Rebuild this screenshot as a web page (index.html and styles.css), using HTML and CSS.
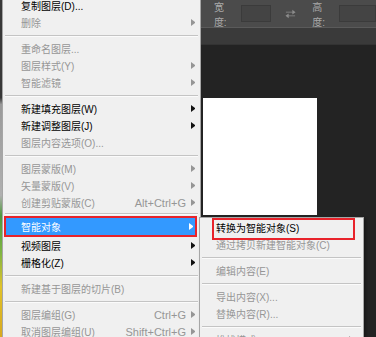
FILE: index.html
```html
<!DOCTYPE html>
<html lang="zh-CN">
<head>
    <meta charset="UTF-8">
    <meta name="viewport" content="width=device-width, initial-scale=1.0">
    <title>图层菜单</title>
    <link rel="stylesheet" href="styles.css">
</head>
<body>
    <div class="app">
        <div class="strip"></div>
        <div class="workspace">
            <div class="options-bar">
                <div class="preset"></div>
                <span class="opt-label label-w">宽度:</span>
                <div class="opt-input"></div>
                <svg class="swap" width="12" height="10" viewBox="0 0 12 10">
                    <path d="M1 2.5h7V0.5l3.5 2.5L8 5.5v-2H1z" fill="#8c8c8c"/>
                    <path d="M11 6.5H4v-2L0.5 7 4 9.5v-2h7z" fill="#8c8c8c"/>
                </svg>
                <span class="opt-label label-h">高度:</span>
                <div class="opt-input wide"></div>
            </div>
            <div class="tab-bar"></div>
            <div class="canvas">
                <div class="doc"></div>
            </div>
        </div>
    </div>

    <!-- layer context menu -->
    <div class="menu main-menu">
        <div class="item"><span class="text">复制图层(D)...</span></div>
        <div class="item off"><span class="text">删除</span><span class="arrow"></span></div>
        <div class="sep"></div>
        <div class="item off"><span class="text">重命名图层...</span></div>
        <div class="item off"><span class="text">图层样式(Y)</span><span class="arrow"></span></div>
        <div class="item off"><span class="text">智能滤镜</span><span class="arrow"></span></div>
        <div class="sep"></div>
        <div class="item"><span class="text">新建填充图层(W)</span><span class="arrow"></span></div>
        <div class="item"><span class="text">新建调整图层(J)</span><span class="arrow"></span></div>
        <div class="item off"><span class="text">图层内容选项(O)...</span></div>
        <div class="sep"></div>
        <div class="item off"><span class="text">图层蒙版(M)</span><span class="arrow"></span></div>
        <div class="item off"><span class="text">矢量蒙版(V)</span><span class="arrow"></span></div>
        <div class="item off"><span class="text">创建剪贴蒙版(C)</span><span class="key">Alt+Ctrl+G</span><span class="arrow"></span></div>
        <div class="sep slim"></div>
        <div class="item active"><span class="text">智能对象</span><span class="arrow"></span></div>
        <div class="item"><span class="text">视频图层</span><span class="arrow"></span></div>
        <div class="item"><span class="text">栅格化(Z)</span><span class="arrow"></span></div>
        <div class="sep"></div>
        <div class="item off"><span class="text">新建基于图层的切片(B)</span></div>
        <div class="sep"></div>
        <div class="item off"><span class="text">图层编组(G)</span><span class="key">Ctrl+G</span><span class="arrow"></span></div>
        <div class="item off"><span class="text">取消图层编组(U)</span><span class="key">Shift+Ctrl+G</span><span class="arrow"></span></div>
    </div>

    <div class="menu sub-menu">
        <div class="item marked"><span class="text">转换为智能对象(S)</span></div>
        <div class="item off"><span class="text">通过拷贝新建智能对象(C)</span></div>
        <div class="sep"></div>
        <div class="item off"><span class="text">编辑内容(E)</span></div>
        <div class="sep"></div>
        <div class="item off"><span class="text">导出内容(X)...</span></div>
        <div class="item off"><span class="text">替换内容(R)...</span></div>
        <div class="sep"></div>
        <div class="item off"><span class="text">堆栈模式</span><span class="arrow"></span></div>
    </div>
</body>
</html>
```

FILE: styles.css
```css
body {
    margin: 0;
    width: 376px;
    height: 337px;
    overflow: hidden;
    position: relative;
    font-family: "Liberation Sans", "Noto Sans CJK SC", sans-serif;
    background: #232323;
}
.app {
    display: flex;
    height: 337px;
}
.strip {
    width: 3px;
    background: linear-gradient(#383838 0%, #383838 29%, #9a9a9a 31%, #b0b0b0 58%, #4f9a3c 64%, #7fb543 75%, #e0c22a 85%, #d8a91f 100%);
}
.workspace {
    flex: 1;
    display: flex;
    flex-direction: column;
}
.options-bar {
    height: 27px;
    display: flex;
    align-items: center;
    background: #4b4b4b;
    border-bottom: 1px solid #5a5a5a;
}
.preset {
    width: 40px;
    height: 20px;
    margin-left: 161px;
    border: 1px solid #333;
    border-radius: 3px;
    box-sizing: border-box;
}
.opt-label {
    font-size: 10px;
    color: #a9a9a9;
}
.label-w {
    margin-left: 13px;
}
.label-h {
    margin-left: 16px;
}
.opt-input {
    width: 33px;
    height: 17px;
    margin-left: 6px;
    background: #444;
    border: 1px solid #3b3b3b;
    box-sizing: border-box;
}
.opt-input.wide {
    width: 40px;
}
.swap {
    margin-left: 14px;
}
.tab-bar {
    height: 16px;
    background: #3a3a3a;
    border-bottom: 1px solid #333;
}
.canvas {
    flex: 1;
    background: #232323;
    padding: 53px 0 0 200px;
}
.doc {
    width: 114px;
    height: 117px;
    background: #fff;
}

/* menus */
.menu {
    position: absolute;
    background: #f0f0f0;
    border: 1px solid #a6a6a6;
    box-sizing: border-box;
    font-size: 10px;
    color: #000;
}
.main-menu {
    left: 2px;
    top: -4px;
    width: 199px;
}
.sub-menu {
    left: 199px;
    top: 217px;
    width: 165px;
    height: 140px;
    padding-top: 1px;
    box-shadow: 2px 2px 3px rgba(0, 0, 0, 0.35);
}
.item {
    height: 17px;
    display: flex;
    align-items: center;
    padding-left: 18px;
    position: relative;
}
.sub-menu .item {
    padding-left: 16px;
}
.item .text {
    flex: 1;
    white-space: nowrap;
}
.item .key {
    font-size: 11px;
}
.item .arrow {
    width: 14px;
    height: 7px;
    display: flex;
    justify-content: center;
}
.item .arrow::before {
    content: "";
    border-left: 4px solid #111;
    border-top: 3.5px solid transparent;
    border-bottom: 3.5px solid transparent;
}
.sub-menu .item .arrow {
    width: 24px;
}
.item.off {
    color: #969696;
}
.item.off .arrow::before {
    border-left-color: #969696;
}
.item.active {
    height: 21px;
    box-sizing: border-box;
    margin: 0 3px 0 1px;
    padding-left: 15px;
    background: #3399ff;
    border: 2px solid #e8232b;
    color: #fff;
}
.item.active .arrow {
    width: 8px;
}
.item.active .arrow::before {
    border-left-color: #fff;
}
.item.marked::after {
    content: "";
    position: absolute;
    left: 12px;
    right: 8px;
    top: -1px;
    bottom: -4px;
    border: 2px solid #e8232b;
}
.sep {
    height: 1px;
    margin: 4px 2px 3px;
    background: #c4c4c4;
    border-bottom: 1px solid #fbfbfb;
}
.sep.slim {
    margin: 2px 2px 1px;
}
```
